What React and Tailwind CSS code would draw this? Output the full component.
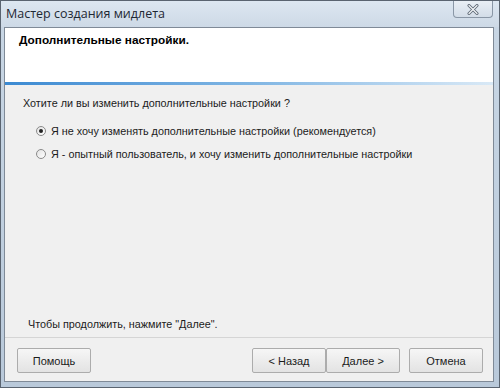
export default function App() {
  const ui = { fontFamily: '"Liberation Sans", Arial, sans-serif' };
  const btn =
    'h-[25px] w-[74px] flex items-center justify-center bg-gradient-to-b from-[#f6f6f6] to-[#e3e3e3] border border-[#acacac] rounded-[2px] text-[11px] text-[#1b1b1b]';

  return (
    <div className="w-[500px] h-[388px] flex flex-col bg-gradient-to-b from-[#c9d7e5] to-[#b9c9da] border border-[#5a6470]" style={ui}>
      {/* title bar */}
      <div className="h-[26px] flex items-start justify-between pl-[5px] pr-[6px] bg-gradient-to-b from-[#dde7f1] to-[#cdd9e6]">
        <span className="self-center pt-[1px] text-[12.5px] text-[#1e2833]" style={{ fontFamily: '"Open Sans", "Noto Sans", sans-serif' }}>
          Мастер создания мидлета
        </span>
        <div className="w-[40px] h-[17px] flex items-center justify-center border border-t-0 border-[#8a97a6] rounded-b-[4px] bg-gradient-to-b from-[#e9eff5] to-[#d3dde8]">
          <svg width="12" height="11" viewBox="0 0 12 11">
            <path d="M2 1.5 L10 9.5 M10 1.5 L2 9.5" stroke="#5b6673" strokeWidth="3" strokeLinecap="round" />
            <path d="M2 1.5 L10 9.5 M10 1.5 L2 9.5" stroke="#f4f6f8" strokeWidth="1.2" strokeLinecap="round" />
          </svg>
        </div>
      </div>

      {/* client area */}
      <div className="flex-1 flex flex-col ml-[3px] mr-[5px] mb-[5px] border border-[#7f8a97]">
        <div className="h-[54px] bg-white pl-[14px] pt-[4px] text-[11.8px] leading-[16px] font-bold text-black">
          Дополнительные настройки.
        </div>
        <div className="h-[3px] bg-gradient-to-r from-[#3b8ad2] via-[#7fb5e3] to-[#d9e9f6]" />

        <div className="flex-1 flex flex-col bg-[#f0f0f0] text-[10.8px] leading-[14px] text-[#1b1b1b]">
          <div className="flex-1 pl-[18px] pt-[11px]">
            <div>Хотите ли вы изменить дополнительные настройки ?</div>
            <div className="pl-[13px] pt-[14px] flex flex-col gap-[9px]">
              <label className="flex items-center gap-[5px]">
                <span className="w-[10px] h-[10px] rounded-full border border-[#8a8a8a] bg-gradient-to-br from-[#e2e2e2] to-white flex items-center justify-center">
                  <span className="w-[4px] h-[4px] rounded-full bg-[#222]" />
                </span>
                Я не хочу изменять дополнительные настройки (рекомендуется)
              </label>
              <label className="flex items-center gap-[5px]">
                <span className="w-[10px] h-[10px] rounded-full border border-[#8a8a8a] bg-gradient-to-br from-[#e2e2e2] to-white" />
                Я - опытный пользователь, и хочу изменить дополнительные настройки
              </label>
            </div>
          </div>
          <div className="pl-[23px] pb-[6px]">Чтобы продолжить, нажмите "Далее".</div>

          <div className="h-[44px] border-t border-[#d5d5d5] flex items-start pt-[10px] pl-[12px] pr-[10px]">
            <button className={btn}>Помощь</button>
            <div className="flex-1" />
            <button className={btn}>&lt; Назад</button>
            <button className={`${btn} border-[#707070]`}>Далее &gt;</button>
            <button className={`${btn} ml-[9px]`}>Отмена</button>
          </div>
        </div>
      </div>
    </div>
  );
}
